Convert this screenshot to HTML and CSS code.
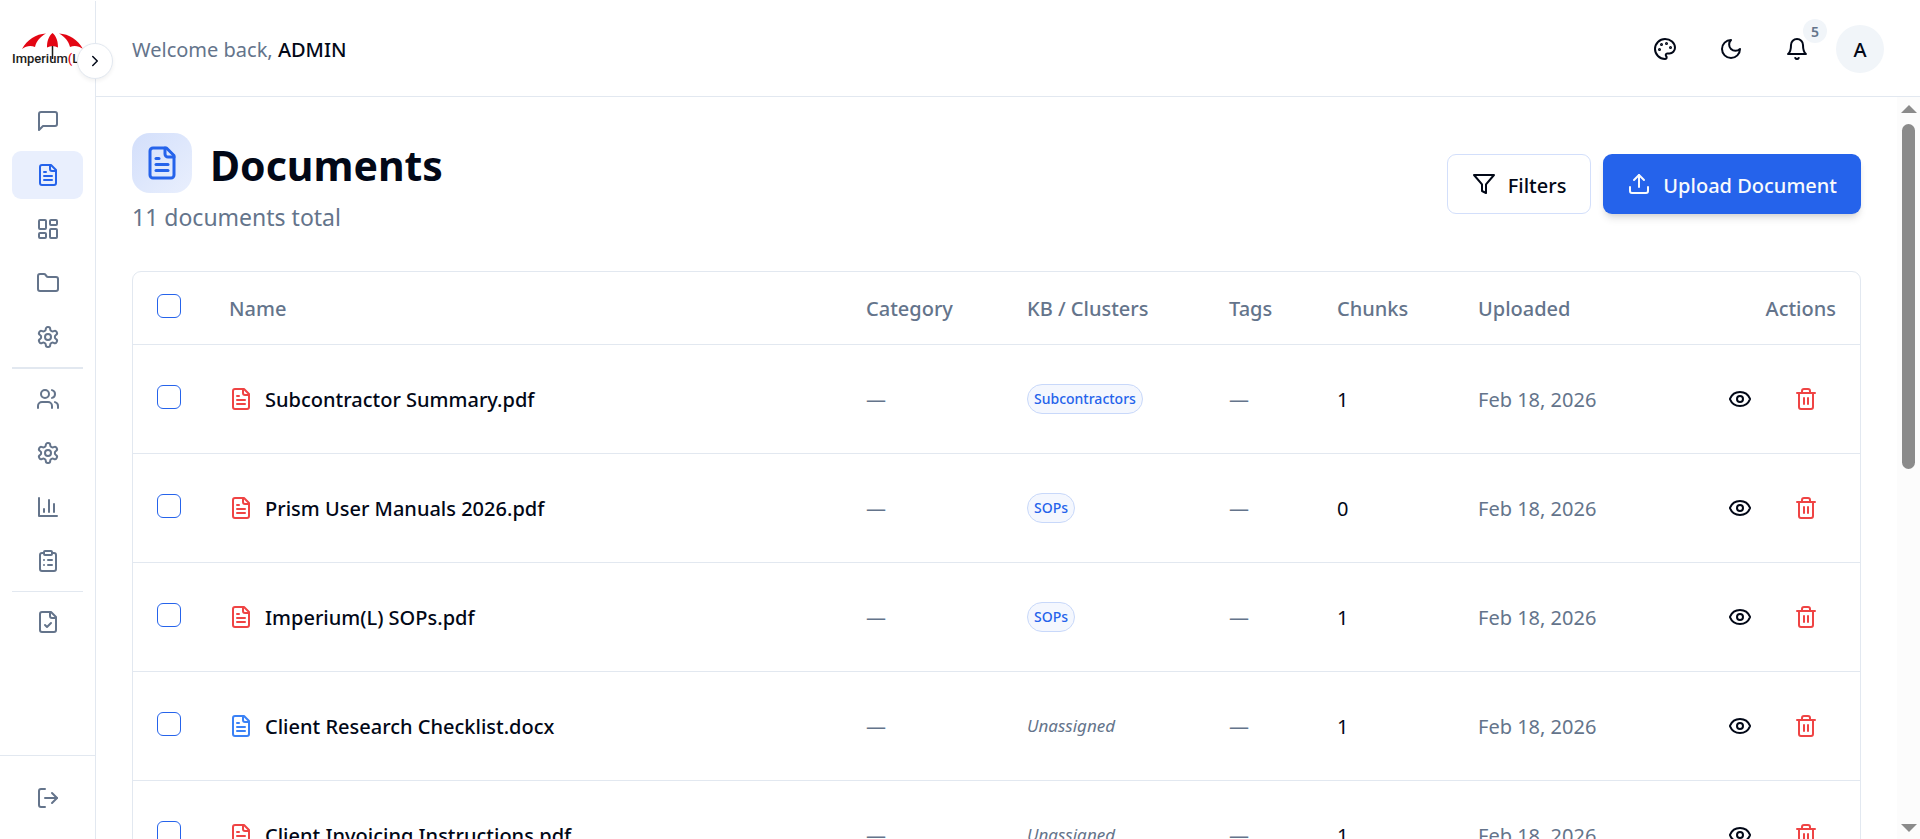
FILE: index.html
```html
<!DOCTYPE html>
<html lang="en">
<head>
    <meta charset="UTF-8">
    <meta name="viewport" content="width=device-width, initial-scale=1.0">
    <title>Documents</title>
    <link rel="stylesheet" href="styles.css">
</head>
<body>
    <!-- Icon sprite -->
    <svg class="sprite" aria-hidden="true">
        <symbol id="i-chat" viewBox="0 0 24 24"><path d="M21 15a2 2 0 0 1-2 2H7l-4 4V5a2 2 0 0 1 2-2h14a2 2 0 0 1 2 2z"/></symbol>
        <symbol id="i-file" viewBox="0 0 24 24"><path d="M15 2H6a2 2 0 0 0-2 2v16a2 2 0 0 0 2 2h12a2 2 0 0 0 2-2V7Z"/><path d="M14 2v4a2 2 0 0 0 2 2h4"/><path d="M10 9H8"/><path d="M16 13H8"/><path d="M16 17H8"/></symbol>
        <symbol id="i-dashboard" viewBox="0 0 24 24"><rect width="7" height="9" x="3" y="3" rx="1"/><rect width="7" height="5" x="14" y="3" rx="1"/><rect width="7" height="9" x="14" y="12" rx="1"/><rect width="7" height="5" x="3" y="16" rx="1"/></symbol>
        <symbol id="i-folder" viewBox="0 0 24 24"><path d="M20 20a2 2 0 0 0 2-2V8a2 2 0 0 0-2-2h-7.9a2 2 0 0 1-1.69-.9L9.6 3.9A2 2 0 0 0 7.93 3H4a2 2 0 0 0-2 2v13a2 2 0 0 0 2 2Z"/></symbol>
        <symbol id="i-settings" viewBox="0 0 24 24"><path d="M12.22 2h-.44a2 2 0 0 0-2 2v.18a2 2 0 0 1-1 1.73l-.43.25a2 2 0 0 1-2 0l-.15-.08a2 2 0 0 0-2.73.73l-.22.38a2 2 0 0 0 .73 2.73l.15.1a2 2 0 0 1 1 1.72v.51a2 2 0 0 1-1 1.74l-.15.09a2 2 0 0 0-.73 2.73l.22.38a2 2 0 0 0 2.73.73l.15-.08a2 2 0 0 1 2 0l.43.25a2 2 0 0 1 1 1.73V20a2 2 0 0 0 2 2h.44a2 2 0 0 0 2-2v-.18a2 2 0 0 1 1-1.73l.43-.25a2 2 0 0 1 2 0l.15.08a2 2 0 0 0 2.73-.73l.22-.39a2 2 0 0 0-.73-2.73l-.15-.08a2 2 0 0 1-1-1.74v-.5a2 2 0 0 1 1-1.74l.15-.09a2 2 0 0 0 .73-2.73l-.22-.38a2 2 0 0 0-2.73-.73l-.15.08a2 2 0 0 1-2 0l-.43-.25a2 2 0 0 1-1-1.73V4a2 2 0 0 0-2-2z"/><circle cx="12" cy="12" r="3"/></symbol>
        <symbol id="i-users" viewBox="0 0 24 24"><path d="M16 21v-2a4 4 0 0 0-4-4H6a4 4 0 0 0-4 4v2"/><circle cx="9" cy="7" r="4"/><path d="M22 21v-2a4 4 0 0 0-3-3.87"/><path d="M16 3.13a4 4 0 0 1 0 7.75"/></symbol>
        <symbol id="i-chart" viewBox="0 0 24 24"><path d="M3 3v18h18"/><path d="M18 17V9"/><path d="M13 17V5"/><path d="M8 17v-3"/></symbol>
        <symbol id="i-clipboard" viewBox="0 0 24 24"><rect width="8" height="4" x="8" y="2" rx="1"/><path d="M16 4h2a2 2 0 0 1 2 2v14a2 2 0 0 1-2 2H6a2 2 0 0 1-2-2V6a2 2 0 0 1 2-2h2"/><path d="M12 11h4"/><path d="M12 16h4"/><path d="M8 11h.01"/><path d="M8 16h.01"/></symbol>
        <symbol id="i-file-check" viewBox="0 0 24 24"><path d="M15 2H6a2 2 0 0 0-2 2v16a2 2 0 0 0 2 2h12a2 2 0 0 0 2-2V7Z"/><path d="M14 2v4a2 2 0 0 0 2 2h4"/><path d="m9 15 2 2 4-4"/></symbol>
        <symbol id="i-logout" viewBox="0 0 24 24"><path d="M9 21H5a2 2 0 0 1-2-2V5a2 2 0 0 1 2-2h4"/><path d="m16 17 5-5-5-5"/><path d="M21 12H9"/></symbol>
        <symbol id="i-chevron" viewBox="0 0 24 24"><path d="m9 18 6-6-6-6"/></symbol>
        <symbol id="i-palette" viewBox="0 0 24 24"><circle class="dot" cx="13.5" cy="6.5" r=".5"/><circle class="dot" cx="17.5" cy="10.5" r=".5"/><circle class="dot" cx="8.5" cy="7.5" r=".5"/><circle class="dot" cx="6.5" cy="12.5" r=".5"/><path d="M12 2C6.5 2 2 6.5 2 12s4.5 10 10 10c.926 0 1.648-.746 1.648-1.688 0-.437-.18-.835-.437-1.125-.29-.289-.438-.652-.438-1.125a1.64 1.64 0 0 1 1.668-1.668h1.996c3.051 0 5.555-2.503 5.555-5.554C21.965 6.012 17.461 2 12 2z"/></symbol>
        <symbol id="i-moon" viewBox="0 0 24 24"><path d="M12 3a6 6 0 0 0 9 9 9 9 0 1 1-9-9Z"/></symbol>
        <symbol id="i-bell" viewBox="0 0 24 24"><path d="M6 8a6 6 0 0 1 12 0c0 7 3 9 3 9H3s3-2 3-9"/><path d="M10.3 21a1.94 1.94 0 0 0 3.4 0"/></symbol>
        <symbol id="i-filter" viewBox="0 0 24 24"><path d="M22 3H2l8 9.46V19l4 2v-8.54L22 3z"/></symbol>
        <symbol id="i-upload" viewBox="0 0 24 24"><path d="M21 15v4a2 2 0 0 1-2 2H5a2 2 0 0 1-2-2v-4"/><path d="m17 8-5-5-5 5"/><path d="M12 3v12"/></symbol>
        <symbol id="i-eye" viewBox="0 0 24 24"><path d="M2.062 12.348a1 1 0 0 1 0-.696 10.75 10.75 0 0 1 19.876 0 1 1 0 0 1 0 .696 10.75 10.75 0 0 1-19.876 0"/><circle cx="12" cy="12" r="3"/></symbol>
        <symbol id="i-trash" viewBox="0 0 24 24"><path d="M3 6h18"/><path d="M19 6v14c0 1-1 2-2 2H7c-1 0-2-1-2-2V6"/><path d="M8 6V4c0-1 1-2 2-2h4c1 0 2 1 2 2v2"/><path d="M10 11v6"/><path d="M14 11v6"/></symbol>
    </svg>

    <div class="app">
        <aside class="sidebar">
            <a class="logo" href="#" aria-label="Imperium(L)">
                <svg width="76" height="36" viewBox="0 0 76 36">
                    <g fill="#e30613">
                        <path d="M10 18C15 9 24 3 34 2.500C28 6 24.500 10 23 16C18.500 14 14 15 10 18Z"/>
                        <path d="M40.500 2C44.500 5.500 46 10 46 16.500C42.500 14.500 38.500 14.500 35 16.500C35 10 36.500 5.500 40.500 2Z"/>
                        <path d="M47 2.500C57 3 66 9 71 18C67 15 62.500 14 58 16C56.500 10 53 6 47 2.500Z"/>
                    </g>
                    <path d="M40.500 15V28" stroke="#1d1d1b" stroke-width="1.500"/>
                    <text class="logo-text" x="0" y="32">Imperium<tspan class="logo-paren">(</tspan>L<tspan class="logo-paren">)</tspan></text>
                </svg>
            </a>
            <button class="toggle" type="button" aria-label="Expand sidebar"><svg class="icon icon-chevron"><use href="#i-chevron"/></svg></button>
            <nav class="nav">
                <a class="nav-item" href="#" aria-label="Chat"><svg class="icon"><use href="#i-chat"/></svg></a>
                <a class="nav-item active" href="#" aria-label="Documents"><svg class="icon"><use href="#i-file"/></svg></a>
                <a class="nav-item" href="#" aria-label="Dashboard"><svg class="icon"><use href="#i-dashboard"/></svg></a>
                <a class="nav-item" href="#" aria-label="Folders"><svg class="icon"><use href="#i-folder"/></svg></a>
                <a class="nav-item" href="#" aria-label="Settings"><svg class="icon"><use href="#i-settings"/></svg></a>
                <hr class="divider divider-thick">
                <a class="nav-item" href="#" aria-label="Users"><svg class="icon"><use href="#i-users"/></svg></a>
                <a class="nav-item" href="#" aria-label="Admin settings"><svg class="icon"><use href="#i-settings"/></svg></a>
                <a class="nav-item" href="#" aria-label="Analytics"><svg class="icon"><use href="#i-chart"/></svg></a>
                <a class="nav-item" href="#" aria-label="Audit log"><svg class="icon"><use href="#i-clipboard"/></svg></a>
                <hr class="divider">
                <a class="nav-item" href="#" aria-label="Approvals"><svg class="icon"><use href="#i-file-check"/></svg></a>
            </nav>
            <div class="sidebar-footer">
                <button class="nav-item" type="button" aria-label="Log out"><svg class="icon"><use href="#i-logout"/></svg></button>
            </div>
        </aside>

        <div class="page">
            <header class="topbar">
                <p class="welcome">Welcome back, <span class="user-name">ADMIN</span></p>
                <div class="topbar-actions">
                    <button class="icon-btn" type="button" aria-label="Theme"><svg class="icon"><use href="#i-palette"/></svg></button>
                    <button class="icon-btn" type="button" aria-label="Dark mode"><svg class="icon"><use href="#i-moon"/></svg></button>
                    <button class="icon-btn" type="button" aria-label="Notifications"><svg class="icon"><use href="#i-bell"/></svg><span class="count">5</span></button>
                    <button class="avatar" type="button">A</button>
                </div>
            </header>

            <div class="scroll-area">
                <main class="content">
                    <div class="page-header">
                        <div class="page-heading">
                            <div class="title-row">
                                <span class="title-icon"><svg class="icon"><use href="#i-file"/></svg></span>
                                <h1>Documents</h1>
                            </div>
                            <p class="subtitle">11 documents total</p>
                        </div>
                        <div class="page-actions">
                            <button class="btn btn-outline" type="button"><svg class="icon"><use href="#i-filter"/></svg><span class="label">Filters</span></button>
                            <button class="btn btn-primary" type="button"><svg class="icon"><use href="#i-upload"/></svg><span class="label">Upload Document</span></button>
                        </div>
                    </div>

                    <div class="table-card">
                        <table class="doc-table">
                            <colgroup>
                                <col class="col-check">
                                <col>
                                <col class="col-category">
                                <col class="col-clusters">
                                <col class="col-tags">
                                <col class="col-chunks">
                                <col class="col-uploaded">
                                <col class="col-actions">
                            </colgroup>
                            <thead>
                                <tr>
                                    <th class="check"><input type="checkbox" aria-label="Select all"></th>
                                    <th>Name</th>
                                    <th>Category</th>
                                    <th>KB / Clusters</th>
                                    <th>Tags</th>
                                    <th>Chunks</th>
                                    <th>Uploaded</th>
                                    <th class="right">Actions</th>
                                </tr>
                            </thead>
                            <tbody>
                                <tr>
                                    <td class="check"><input type="checkbox" aria-label="Select Subcontractor Summary.pdf"></td>
                                    <td><div class="doc-name"><svg class="icon pdf"><use href="#i-file"/></svg><span class="label">Subcontractor Summary.pdf</span></div></td>
                                    <td class="text muted">—</td>
                                    <td><span class="tag">Subcontractors</span></td>
                                    <td class="text muted">—</td>
                                    <td class="text">1</td>
                                    <td class="text muted">Feb 18, 2026</td>
                                    <td><div class="row-actions"><button type="button" aria-label="View"><svg class="icon"><use href="#i-eye"/></svg></button><button class="delete" type="button" aria-label="Delete"><svg class="icon"><use href="#i-trash"/></svg></button></div></td>
                                </tr>
                                <tr>
                                    <td class="check"><input type="checkbox" aria-label="Select Prism User Manuals 2026.pdf"></td>
                                    <td><div class="doc-name"><svg class="icon pdf"><use href="#i-file"/></svg><span class="label">Prism User Manuals 2026.pdf</span></div></td>
                                    <td class="text muted">—</td>
                                    <td><span class="tag">SOPs</span></td>
                                    <td class="text muted">—</td>
                                    <td class="text">0</td>
                                    <td class="text muted">Feb 18, 2026</td>
                                    <td><div class="row-actions"><button type="button" aria-label="View"><svg class="icon"><use href="#i-eye"/></svg></button><button class="delete" type="button" aria-label="Delete"><svg class="icon"><use href="#i-trash"/></svg></button></div></td>
                                </tr>
                                <tr>
                                    <td class="check"><input type="checkbox" aria-label="Select Imperium(L) SOPs.pdf"></td>
                                    <td><div class="doc-name"><svg class="icon pdf"><use href="#i-file"/></svg><span class="label">Imperium(L) SOPs.pdf</span></div></td>
                                    <td class="text muted">—</td>
                                    <td><span class="tag">SOPs</span></td>
                                    <td class="text muted">—</td>
                                    <td class="text">1</td>
                                    <td class="text muted">Feb 18, 2026</td>
                                    <td><div class="row-actions"><button type="button" aria-label="View"><svg class="icon"><use href="#i-eye"/></svg></button><button class="delete" type="button" aria-label="Delete"><svg class="icon"><use href="#i-trash"/></svg></button></div></td>
                                </tr>
                                <tr>
                                    <td class="check"><input type="checkbox" aria-label="Select Client Research Checklist.docx"></td>
                                    <td><div class="doc-name"><svg class="icon docx"><use href="#i-file"/></svg><span class="label">Client Research Checklist.docx</span></div></td>
                                    <td class="text muted">—</td>
                                    <td><em class="unassigned">Unassigned</em></td>
                                    <td class="text muted">—</td>
                                    <td class="text">1</td>
                                    <td class="text muted">Feb 18, 2026</td>
                                    <td><div class="row-actions"><button type="button" aria-label="View"><svg class="icon"><use href="#i-eye"/></svg></button><button class="delete" type="button" aria-label="Delete"><svg class="icon"><use href="#i-trash"/></svg></button></div></td>
                                </tr>
                                <tr>
                                    <td class="check"><input type="checkbox" aria-label="Select Client Invoicing Instructions.pdf"></td>
                                    <td><div class="doc-name"><svg class="icon pdf"><use href="#i-file"/></svg><span class="label">Client Invoicing Instructions.pdf</span></div></td>
                                    <td class="text muted">—</td>
                                    <td><em class="unassigned">Unassigned</em></td>
                                    <td class="text muted">—</td>
                                    <td class="text">1</td>
                                    <td class="text muted">Feb 18, 2026</td>
                                    <td><div class="row-actions"><button type="button" aria-label="View"><svg class="icon"><use href="#i-eye"/></svg></button><button class="delete" type="button" aria-label="Delete"><svg class="icon"><use href="#i-trash"/></svg></button></div></td>
                                </tr>
                            </tbody>
                        </table>
                    </div>
                </main>
                <div class="scrollbar" aria-hidden="true">
                    <span class="arrow-up"></span>
                    <div class="track"><div class="thumb"></div></div>
                    <span class="arrow-down"></span>
                </div>
            </div>
        </div>
    </div>
</body>
</html>
```
FILE: styles.css
```css
* {
    box-sizing: border-box;
}
body {
    margin: 0;
    font-family: "Noto Sans", "Open Sans", sans-serif;
    font-size: 20px;
    line-height: 30px;
    color: #020817;
    background: #fff;
}
h1, p {
    margin: 0;
}
button {
    font: inherit;
    color: inherit;
    background: none;
    border: 0;
    padding: 0;
    cursor: pointer;
}
.sprite {
    display: none;
}
.icon {
    width: 24px;
    height: 24px;
    flex-shrink: 0;
    fill: none;
    stroke: currentColor;
    stroke-width: 2;
    stroke-linecap: round;
    stroke-linejoin: round;
}
.dot {
    fill: currentColor;
}
.label {
    padding-top: 3px;
}
.app {
    display: flex;
    height: 100vh;
    padding-top: 1px;
    overflow: hidden;
}

/* Sidebar */
.sidebar {
    position: relative;
    display: flex;
    flex-direction: column;
    flex-shrink: 0;
    width: 96px;
    border-right: 1px solid #e2e8f0;
}
.logo {
    display: flex;
    align-items: center;
    height: 96px;
    padding-left: 12px;
}
.logo-text {
    font-family: Roboto, sans-serif;
    font-size: 13px;
    font-weight: 500;
    fill: #1d1d1b;
}
.logo-paren {
    fill: #e30613;
}
.toggle {
    position: absolute;
    top: 42px;
    right: -18px;
    display: flex;
    align-items: center;
    justify-content: center;
    width: 36px;
    height: 36px;
    background: #fff;
    border: 1px solid #e2e8f0;
    border-radius: 50%;
    box-shadow: 0 2px 4px rgba(0, 0, 0, 0.06);
}
.icon-chevron {
    width: 18px;
    height: 18px;
}
.nav {
    display: flex;
    flex: 1;
    flex-direction: column;
    gap: 6px;
    padding: 0 12px;
}
.nav-item {
    display: flex;
    align-items: center;
    width: 100%;
    height: 48px;
    padding: 0 24px;
    color: #64748b;
    border-radius: 9px;
}
.nav-item.active {
    color: #2563eb;
    background: #e9effd;
}
.divider {
    width: 100%;
    height: 1px;
    margin: 0;
    border: 0;
    background: #e2e8f0;
}
.divider-thick {
    height: 2px;
}
.sidebar-footer {
    padding: 18px 12px 17px;
    border-top: 1px solid #e2e8f0;
}

/* Top bar */
.page {
    position: relative;
    display: flex;
    flex: 1;
    flex-direction: column;
    min-width: 0;
    z-index: -1;
}
.topbar {
    display: flex;
    align-items: center;
    justify-content: space-between;
    height: 96px;
    flex-shrink: 0;
    padding: 0 36px;
    border-bottom: 1px solid #e2e8f0;
}
.welcome {
    padding-top: 3px;
    color: #64748b;
}
.user-name {
    font-weight: 500;
    color: #020817;
}
.topbar-actions {
    display: flex;
    align-items: center;
    gap: 12px;
}
.icon-btn {
    position: relative;
    display: flex;
    align-items: center;
    justify-content: center;
    width: 54px;
    height: 54px;
}
.count {
    position: absolute;
    top: -3px;
    right: -3px;
    width: 24px;
    height: 24px;
    padding-top: 1px;
    font-size: 14px;
    font-weight: 600;
    line-height: 24px;
    text-align: center;
    color: #64748b;
    background: #f1f5f9;
    border-radius: 50%;
}
.avatar {
    width: 48px;
    height: 48px;
    padding-top: 3px;
    font-weight: 500;
    background: #f1f5f9;
    border-radius: 50%;
}

/* Content */
.scroll-area {
    display: flex;
    flex: 1;
    min-height: 0;
}
.content {
    flex: 1;
    min-width: 0;
    padding: 36px;
    overflow: hidden;
}
.page-header {
    display: flex;
    align-items: center;
    justify-content: space-between;
    margin-bottom: 36px;
}
.title-row {
    display: flex;
    align-items: center;
    gap: 18px;
    height: 60px;
    margin-bottom: 6px;
}
.title-icon {
    display: flex;
    align-items: center;
    justify-content: center;
    width: 60px;
    height: 60px;
    color: #2563eb;
    background: linear-gradient(135deg, #d3dffb, #e9effd);
    border-radius: 18px;
}
.title-icon .icon {
    width: 36px;
    height: 36px;
}
h1 {
    padding-top: 4px;
    font-size: 41px;
    font-weight: 700;
    line-height: 60px;
}
.subtitle {
    padding-top: 1px;
    font-size: 23px;
    line-height: 35px;
    color: #64748b;
}
.page-actions {
    display: flex;
    gap: 12px;
}
.btn {
    display: flex;
    align-items: center;
    gap: 12px;
    height: 60px;
    padding: 0 24px;
    font-weight: 500;
    border-radius: 9px;
}
.btn-outline {
    border: 1px solid #d3dffb;
}
.btn-primary {
    color: #f8fafc;
    background: #2563eb;
    box-shadow: 0 6px 9px -2px rgba(0, 0, 0, 0.12), 0 3px 6px -3px rgba(0, 0, 0, 0.12);
}

/* Documents table */
.table-card {
    border: 1px solid #e2e8f0;
    border-radius: 9px;
}
.doc-table {
    width: 100%;
    table-layout: fixed;
    border-collapse: collapse;
}
.col-check { width: 72px; }
.col-category { width: 161px; }
.col-clusters { width: 202px; }
.col-tags { width: 108px; }
.col-chunks { width: 141px; }
.col-uploaded { width: 182px; }
.col-actions { width: 224px; }
.doc-table th,
.doc-table td {
    padding: 0 24px;
    text-align: left;
    white-space: nowrap;
}
.doc-table th {
    height: 72px;
    font-weight: 500;
    color: #64748b;
}
.doc-table td {
    height: 109px;
}
.doc-table th,
.doc-table .text {
    padding-top: 3px;
}
.doc-table .check {
    padding: 0 24px 4px;
}
.doc-table tr {
    border-bottom: 1px solid #e2e8f0;
}
.doc-table th.right {
    text-align: right;
}
.doc-table input {
    display: block;
    width: 24px;
    height: 24px;
    margin: 0;
    appearance: none;
    border: 1px solid #2563eb;
    border-radius: 6px;
}
.doc-name {
    display: flex;
    align-items: center;
    gap: 12px;
    font-weight: 500;
}
.pdf {
    color: #ef4444;
}
.docx {
    color: #3b82f6;
}
.doc-table .muted {
    color: #64748b;
}
.tag {
    display: block;
    width: fit-content;
    padding: 0 6px;
    font-size: 14px;
    font-weight: 500;
    line-height: 28px;
    color: #2563eb;
    background: #f4f7fe;
    border: 1px solid #c8d8fa;
    border-radius: 15px;
}
.unassigned {
    font-size: 17px;
    color: #64748b;
}
.row-actions {
    display: flex;
    justify-content: flex-end;
    gap: 6px;
}
.row-actions button {
    display: flex;
    align-items: center;
    justify-content: center;
    width: 60px;
    height: 54px;
}
.row-actions .delete {
    color: #ef4444;
}

/* Scrollbar */
.scrollbar {
    display: flex;
    flex-direction: column;
    align-items: center;
    gap: 11px;
    width: 23px;
    padding: 8px 0 7px;
    background: #fcfcfc;
}
.arrow-up,
.arrow-down {
    border: 8px solid transparent;
}
.arrow-up {
    border-top: 0;
    border-bottom-color: #8b8b8b;
}
.arrow-down {
    border-bottom: 0;
    border-top-color: #8b8b8b;
}
.track {
    flex: 1;
    width: 13px;
}
.thumb {
    height: 50%;
    background: #8b8b8b;
    border-radius: 7px;
}
```
